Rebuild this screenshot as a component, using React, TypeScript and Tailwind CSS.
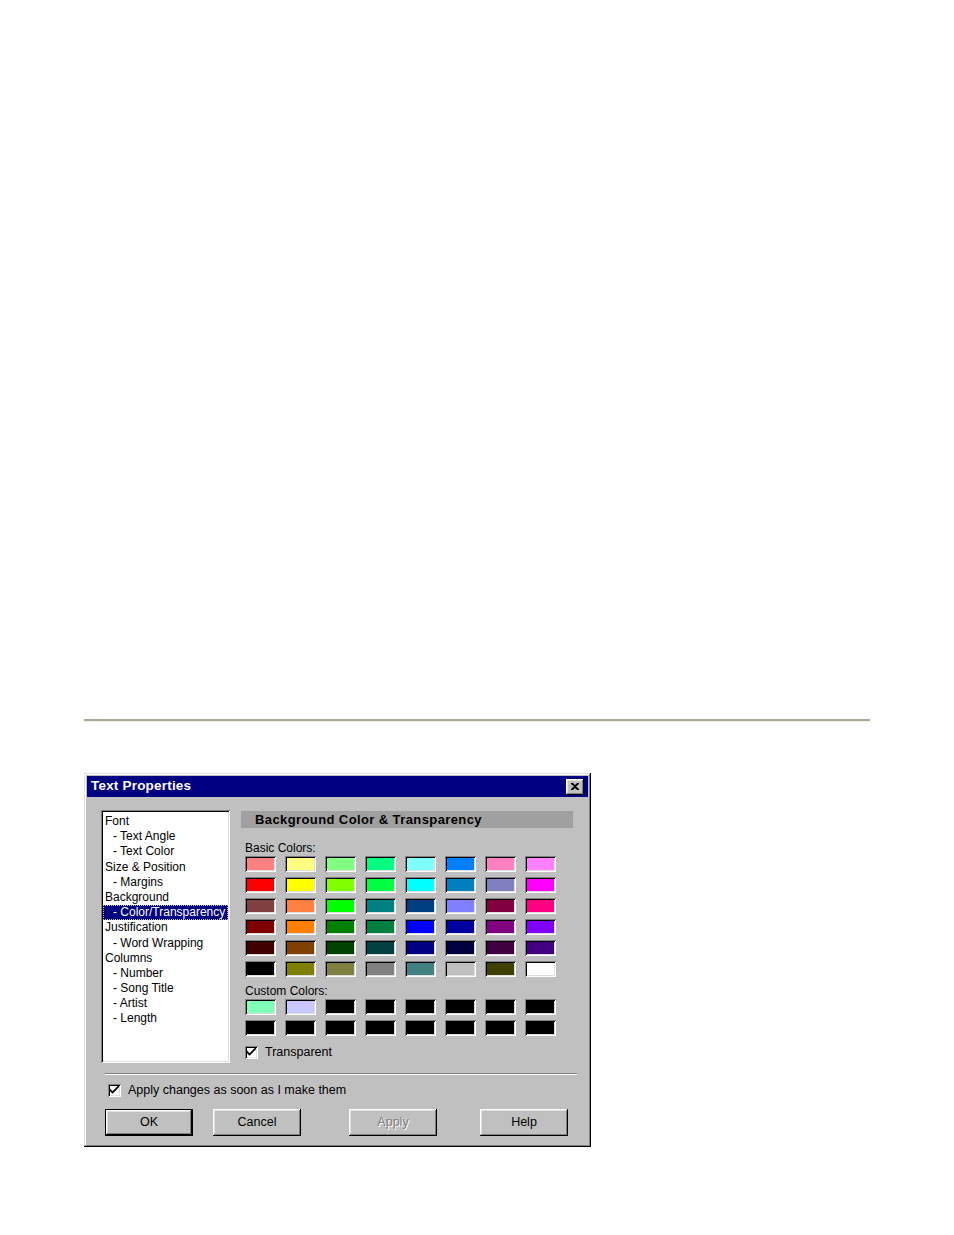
import React from 'react';

const raised =
  'shadow-[inset_-1px_-1px_#000,inset_1px_1px_#fff,inset_-2px_-2px_#808080,inset_2px_2px_#dfdfdf]';
const sunken =
  'shadow-[inset_1px_1px_#808080,inset_-1px_-1px_#fff,inset_2px_2px_#000,inset_-2px_-2px_#dfdfdf]';

const treeItems: { label: string; sub?: boolean; selected?: boolean }[] = [
  { label: 'Font' },
  { label: '- Text Angle', sub: true },
  { label: '- Text Color', sub: true },
  { label: 'Size & Position' },
  { label: '- Margins', sub: true },
  { label: 'Background' },
  { label: '- Color/Transparency', sub: true, selected: true },
  { label: 'Justification' },
  { label: '- Word Wrapping', sub: true },
  { label: 'Columns' },
  { label: '- Number', sub: true },
  { label: '- Song Title', sub: true },
  { label: '- Artist', sub: true },
  { label: '- Length', sub: true },
];

const basicColors = [
  'bg-[#ff8080]', 'bg-[#ffff80]', 'bg-[#80ff80]', 'bg-[#00ff80]', 'bg-[#80ffff]', 'bg-[#0080ff]', 'bg-[#ff80c0]', 'bg-[#ff80ff]',
  'bg-[#ff0000]', 'bg-[#ffff00]', 'bg-[#80ff00]', 'bg-[#00ff40]', 'bg-[#00ffff]', 'bg-[#0080c0]', 'bg-[#8080c0]', 'bg-[#ff00ff]',
  'bg-[#804040]', 'bg-[#ff8040]', 'bg-[#00ff00]', 'bg-[#008080]', 'bg-[#004080]', 'bg-[#8080ff]', 'bg-[#800040]', 'bg-[#ff0080]',
  'bg-[#800000]', 'bg-[#ff8000]', 'bg-[#008000]', 'bg-[#008040]', 'bg-[#0000ff]', 'bg-[#0000a0]', 'bg-[#800080]', 'bg-[#8000ff]',
  'bg-[#400000]', 'bg-[#804000]', 'bg-[#004000]', 'bg-[#004040]', 'bg-[#000080]', 'bg-[#000040]', 'bg-[#400040]', 'bg-[#400080]',
  'bg-[#000000]', 'bg-[#808000]', 'bg-[#808040]', 'bg-[#808080]', 'bg-[#408080]', 'bg-[#c0c0c0]', 'bg-[#404000]', 'bg-[#ffffff]',
];

const customColors = [
  'bg-[#80ffb8]', 'bg-[#c8c8ff]', 'bg-black', 'bg-black', 'bg-black', 'bg-black', 'bg-black', 'bg-black',
  'bg-black', 'bg-black', 'bg-black', 'bg-black', 'bg-black', 'bg-black', 'bg-black', 'bg-black',
];

function Swatches({ colors }: { colors: string[] }) {
  return (
    <div className="grid grid-cols-[repeat(8,31px)] gap-x-[9px] gap-y-[5px]">
      {colors.map((c, i) => (
        <div key={i} className={`h-[16px] w-[31px] ${c} ${sunken}`} />
      ))}
    </div>
  );
}

function CheckBox() {
  return (
    <div className={`flex h-[13px] w-[13px] items-center justify-center bg-white ${sunken}`}>
      <svg width="9" height="9" viewBox="0 0 7 7" className="mt-[1px]">
        <path d="M0 2 L0 4 L2 6 L7 1 L7 -1 L2 4 Z" fill="#000" />
      </svg>
    </div>
  );
}

function Button({
  label,
  isDefault,
  disabled,
  className = '',
}: {
  label: string;
  isDefault?: boolean;
  disabled?: boolean;
  className?: string;
}) {
  return (
    <button
      type="button"
      className={`flex h-[27px] w-[88px] items-center justify-center bg-[#c0c0c0] text-[12.5px] ${
        isDefault
          ? 'shadow-[inset_0_0_0_1px_#000,inset_-2px_-2px_#000,inset_2px_2px_#fff,inset_-3px_-3px_#808080,inset_3px_3px_#dfdfdf]'
          : raised
      } ${disabled ? 'text-[#808080] [text-shadow:1px_1px_#fff]' : 'text-black'} ${className}`}
    >
      {label}
    </button>
  );
}

export default function App() {
  return (
    <div className="min-h-screen bg-white pt-[719px] font-['Liberation_Sans',Arial,sans-serif]">
      {/* rule */}
      <div className="ml-[84px] w-[786px] border-t-2 border-b border-t-[#aca899] border-b-[#f1efe2]" />

      {/* dialog */}
      <div className="ml-[84px] mt-[51px] h-[374px] w-[507px] bg-[#c0c0c0] p-[3px] shadow-[inset_-1px_-1px_#000,inset_1px_1px_#dfdfdf,inset_-2px_-2px_#808080,inset_2px_2px_#fff]">
        {/* title bar */}
        <div className="flex h-[21px] items-center justify-between bg-[#000080] pl-[4px] pr-[4px]">
          <span className="text-[13.5px] font-bold tracking-[0.2px] text-white">Text Properties</span>
          <div className={`flex h-[16px] w-[18px] items-center justify-center bg-[#c0c0c0] ${raised}`}>
            <svg width="8" height="7" viewBox="0 0 8 7">
              <path d="M0 0h2l2 2 2-2h2v1L5 3.5 8 6v1H6L4 5 2 7H0V6l3-2.5L0 1z" fill="#000" />
            </svg>
          </div>
        </div>

        {/* body */}
        <div className="flex pl-[14px] pt-[13px]">
          {/* tree */}
          <div className={`h-[253px] w-[129px] shrink-0 overflow-hidden bg-white p-[2px] pt-[4px] ${sunken}`}>
            {treeItems.map((it) => (
              <div
                key={it.label}
                className={`h-[15.2px] whitespace-nowrap text-[12px] leading-[15.2px] ${
                  it.sub ? 'pl-[10px]' : 'pl-[2px]'
                } ${
                  it.selected
                    ? 'bg-[#000080] text-white outline-1 -outline-offset-1 outline-dotted outline-[#c8c8a0]'
                    : 'text-black'
                }`}
              >
                {it.label}
              </div>
            ))}
          </div>

          {/* right panel */}
          <div className="ml-[11px] h-[253px] w-[332px] pt-[1px]">
            <div className="flex h-[17px] items-center bg-[#a0a0a0] pl-[14px] text-[13px] font-bold tracking-[0.4px] text-black">
              Background Color &amp; Transparency
            </div>
            <div className="pl-[4px]">
              <div className="mt-[13px] h-[14px] text-[12px] leading-[14px] text-black">Basic Colors:</div>
              <div className="mt-[1px]">
                <Swatches colors={basicColors} />
              </div>
              <div className="mt-[7px] h-[14px] text-[12px] leading-[14px] text-black">Custom Colors:</div>
              <div className="mt-[1px]">
                <Swatches colors={customColors} />
              </div>
              <div className="mt-[9px] flex h-[14px] items-center">
                <CheckBox />
                <span className="ml-[7px] text-[12.5px] leading-[14px] text-black">Transparent</span>
              </div>
            </div>
          </div>
        </div>

        {/* separator */}
        <div className="ml-[18px] mt-[10px] w-[472px] border-t border-b border-t-[#808080] border-b-white" />

        {/* apply checkbox */}
        <div className="ml-[21px] mt-[8px] flex h-[14px] items-center">
          <CheckBox />
          <span className="ml-[7px] text-[12.5px] leading-[14px] text-black">Apply changes as soon as I make them</span>
        </div>

        {/* buttons */}
        <div className="ml-[18px] mt-[12px] flex">
          <Button label="OK" isDefault />
          <Button label="Cancel" className="ml-[20px]" />
          <Button label="Apply" disabled className="ml-[48px]" />
          <Button label="Help" className="ml-[43px]" />
        </div>
      </div>
    </div>
  );
}
